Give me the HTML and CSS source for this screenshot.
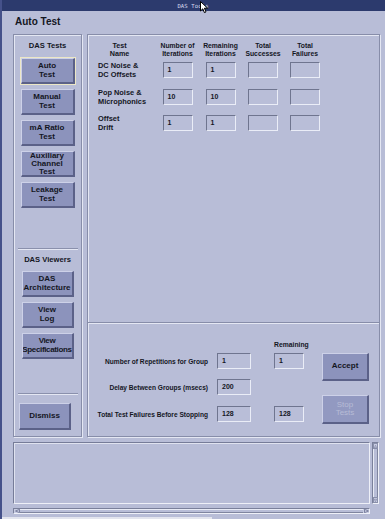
FILE: index.html
```html
<!DOCTYPE html>
<html>
<head>
<meta charset="utf-8">
<link rel="stylesheet" href="styles.css">
</head>
<body>
<div class="window">
  <div class="titlebar">
    <span class="title-text">DAS Tools</span>
    <svg class="cursor" width="9" height="13" viewBox="0 0 9 13"><path d="M0.5 0.5 L0.5 10 L2.8 7.8 L4.4 11.6 L6 10.9 L4.4 7.2 L7.6 7.2 Z" fill="#fff" stroke="#000" stroke-width="1"/></svg>
  </div>
  <div class="content">
    <h1 class="heading">Auto Test</h1>
    <div class="panels">
      <section class="side">
        <div class="side-title">DAS Tests</div>
        <div class="btn-stack">
          <button class="btn focus">Auto<br>Test</button>
          <button class="btn">Manual<br>Test</button>
          <button class="btn">mA Ratio<br>Test</button>
          <button class="btn three">Auxiliary<br>Channel<br>Test</button>
          <button class="btn">Leakage<br>Test</button>
        </div>
        <div class="sep sep1"></div>
        <div class="side-title viewers">DAS Viewers</div>
        <div class="btn-stack narrow">
          <button class="btn">DAS<br>Architecture</button>
          <button class="btn">View<br>Log</button>
          <button class="btn tight">View<br>Specifications</button>
        </div>
        <div class="sep sep2"></div>
        <button class="btn dismiss">Dismiss</button>
      </section>
      <section class="main">
        <div class="tests">
          <div class="trow thead">
            <div class="h hname">Test<br>Name</div>
            <div class="h">Number of<br>Iterations</div>
            <div class="h">Remaining<br>Iterations</div>
            <div class="h">Total<br>Successes</div>
            <div class="h">Total<br>Failures</div>
          </div>
          <div class="trow first">
            <div class="rlabel">DC Noise &amp;<br>DC Offsets</div>
            <div class="field">1</div>
            <div class="field">1</div>
            <div class="field"></div>
            <div class="field"></div>
          </div>
          <div class="trow">
            <div class="rlabel">Pop Noise &amp;<br>Microphonics</div>
            <div class="field">10</div>
            <div class="field">10</div>
            <div class="field"></div>
            <div class="field"></div>
          </div>
          <div class="trow">
            <div class="rlabel">Offset<br>Drift</div>
            <div class="field">1</div>
            <div class="field">1</div>
            <div class="field"></div>
            <div class="field"></div>
          </div>
        </div>
        <div class="group">
          <div class="group-fields">
            <div class="grow ghead"><span></span><span></span><span class="rem">Remaining</span></div>
            <div class="grow g1"><span class="glabel">Number of Repetitions for Group</span><div class="field wide">1</div><div class="field">1</div></div>
            <div class="grow g2"><span class="glabel">Delay Between Groups (msecs)</span><div class="field wide">200</div><span></span></div>
            <div class="grow g3"><span class="glabel">Total Test Failures Before Stopping</span><div class="field wide">128</div><div class="field">128</div></div>
          </div>
          <div class="group-btns">
            <button class="btn accept">Accept</button>
            <button class="btn stop">Stop<br>Tests</button>
          </div>
        </div>
      </section>
    </div>
    <div class="log-row">
      <div class="log"></div>
      <div class="vscroll">
        <div class="arrow up"><svg width="5" height="5" viewBox="0 0 5 5"><path d="M2.5 0.5 L4.5 4.5 L0.5 4.5 Z" fill="none" stroke="#6a7090" stroke-width="0.8"/></svg></div>
        <div class="track"></div>
        <div class="arrow down"><svg width="5" height="5" viewBox="0 0 5 5"><path d="M0.5 0.5 L4.5 0.5 L2.5 4.5 Z" fill="none" stroke="#6a7090" stroke-width="0.8"/></svg></div>
      </div>
    </div>
    <div class="hscroll">
      <div class="harrow"><svg width="5" height="4" viewBox="0 0 5 4"><path d="M0.5 2 L4.5 0.3 L4.5 3.7 Z" fill="none" stroke="#6a7090" stroke-width="0.8"/></svg></div>
      <div class="htrack"></div>
      <div class="harrow"><svg width="5" height="4" viewBox="0 0 5 4"><path d="M4.5 2 L0.5 0.3 L0.5 3.7 Z" fill="none" stroke="#6a7090" stroke-width="0.8"/></svg></div>
    </div>
    <div class="status"></div>
  </div>
</div>
</body>
</html>
```

FILE: styles.css
```css
* { box-sizing: border-box; }
html, body {
  margin: 0;
  padding: 0;
  background: #b8bdd7;
  font-family: "Liberation Sans", Arial, sans-serif;
  color: #14161f;
}
.window {
  width: 385px;
  height: 519px;
  border-left: 2px solid #45518a;
  overflow: hidden;
  position: relative;
}
.titlebar {
  height: 11px;
  background: #2c3a6d;
  display: flex;
  justify-content: center;
  align-items: center;
  position: relative;
}
.title-text {
  font-family: "DejaVu Sans Mono", "Liberation Mono", monospace;
  font-size: 5.6px;
  color: #d8dcf0;
  letter-spacing: 0.1px;
  margin-left: -1px;
}
.cursor {
  position: absolute;
  left: 198px;
  top: 1px;
}
.content {
  padding-left: 11px;
}
.heading {
  margin: 0;
  font-size: 10px;
  font-weight: bold;
  line-height: 12px;
  padding: 5px 0 6px 2px;
  height: 23px;
}
.panels {
  display: flex;
  height: 403px;
  gap: 5px;
}
.side, .main {
  border: 1px solid #878da9;
  box-shadow: inset 1px 1px 0 #e4e7f3, 1px 1px 0 #e4e7f3;
}
.side {
  width: 69px;
  flex: none;
  display: flex;
  flex-direction: column;
  align-items: center;
}
.side-title {
  font-size: 7.6px;
  font-weight: bold;
  line-height: 10px;
  margin-top: 6px;
  text-align: center;
}
.side-title.viewers { margin-top: 5px; }
.btn-stack {
  display: flex;
  flex-direction: column;
  gap: 5px;
  margin-top: 7px;
}
.btn-stack.narrow { margin-top: 6px; }
.btn {
  font-family: "Liberation Sans", Arial, sans-serif;
  font-weight: bold;
  font-size: 8px;
  line-height: 8.5px;
  color: #14161f;
  background: #8c93bc;
  width: 54px;
  height: 26px;
  padding: 0;
  margin: 0;
  border-style: solid;
  border-width: 1px 2px 2px 1px;
  border-color: #cdd1e8 #5b6188 #5b6188 #cdd1e8;
  text-align: center;
  overflow: hidden;
  white-space: nowrap;
  display: flex;
  align-items: center;
  justify-content: center;
}
.btn.three { line-height: 8px; }
.btn.tight { letter-spacing: -0.35px; }
.btn.focus { outline: 1px solid #ece7c6; }
.btn-stack.narrow .btn { width: 52px; }
.sep {
  width: 60px;
  height: 2px;
  border-top: 1px solid #8a90ac;
  border-bottom: 1px solid #e4e7f3;
}
.sep1 { margin-top: 40px; }
.sep2 { margin-top: 34px; }
.dismiss {
  margin-top: 8px;
  width: 52px;
  height: 27px;
  margin-right: 5px;
}
.main {
  flex: none;
  width: 293px;
  display: flex;
  flex-direction: column;
}
.tests {
  height: 288px;
  padding: 7px 0 0 10px;
  border-bottom: 1px solid #878da9;
  box-shadow: 0 1px 0 #e4e7f3;
}
.trow {
  display: grid;
  grid-template-columns: 58px 43px 43px 42px 42px;
  align-items: center;
  height: 18px;
  margin-top: 8.5px;
}
.trow.thead {
  height: 16px;
  margin-top: 0;
  align-items: start;
}
.trow.first { margin-top: 3px; }
.h {
  font-size: 6.8px;
  font-weight: bold;
  line-height: 8px;
  text-align: center;
  white-space: nowrap;
}
.hname {
  font-size: 7.2px;
  padding-right: 15px;
}
.rlabel {
  font-size: 7.4px;
  font-weight: bold;
  line-height: 9px;
  white-space: nowrap;
}
.field {
  width: 30px;
  height: 16px;
  justify-self: center;
  border-style: solid;
  border-width: 1px;
  border-color: #6f758f #eaedf7 #eaedf7 #6f758f;
  background: #b9bed8;
  font-size: 7px;
  font-weight: bold;
  line-height: 14px;
  padding-left: 4px;
}
.group {
  flex: 1;
  display: flex;
  margin-top: 1px;
}
.group-fields {
  width: 234px;
  padding-top: 17px;
}
.grow {
  display: grid;
  grid-template-columns: 129px 57px 48px;
  align-items: center;
  height: 16px;
}
.grow .field { justify-self: start; }
.grow .field.wide { width: 34px; }
.ghead { height: 8px; }
.g1 { margin-top: 4px; }
.g2 { margin-top: 10px; }
.g3 { margin-top: 11px; }
.rem {
  font-size: 6.8px;
  font-weight: bold;
  line-height: 8px;
  width: 31px;
  text-align: center;
}
.glabel {
  font-size: 6.6px;
  font-weight: bold;
  text-align: right;
  padding-right: 9px;
  white-space: nowrap;
}
.group-btns {
  display: flex;
  flex-direction: column;
  padding-top: 29px;
}
.accept {
  width: 47px;
  height: 28px;
}
.stop {
  width: 47px;
  height: 29px;
  margin-top: 14px;
  color: #b7bcd6;
  background: #9299c1;
  font-weight: normal;
}
.log-row {
  display: flex;
  margin-top: 5px;
  height: 62px;
  gap: 2px;
}
.log {
  width: 357px;
  border-style: solid;
  border-width: 1px;
  border-color: #767c98 #eef0f8 #eef0f8 #767c98;
  box-shadow: inset 1px 1px 0 #dfe2ef;
}
.vscroll {
  width: 7px;
  display: flex;
  flex-direction: column;
  border-style: solid;
  border-width: 1px;
  border-color: #7a809b #eef0f8 #eef0f8 #7a809b;
}
.arrow {
  height: 6px;
  display: flex;
  justify-content: center;
  align-items: center;
  border: 1px solid #8a90ab;
  background: #c9cde3;
}
.track {
  flex: 1;
  border-left: 1px solid #e7eaf5;
  border-right: 1px solid #7f859f;
}
.hscroll {
  margin-top: 4px;
  width: 357px;
  height: 6px;
  display: flex;
  border-style: solid;
  border-width: 1px;
  border-color: #7a809b #eef0f8 #eef0f8 #7a809b;
}
.harrow {
  width: 6px;
  display: flex;
  justify-content: center;
  align-items: center;
  background: #c9cde3;
}
.htrack {
  flex: 1;
  border-top: 1px solid #e7eaf5;
  border-bottom: 1px solid #7f859f;
}
.status {
  margin-top: 3px;
  margin-left: -13px;
  width: 212px;
  height: 3px;
  background: #e3e5ee;
}
```
